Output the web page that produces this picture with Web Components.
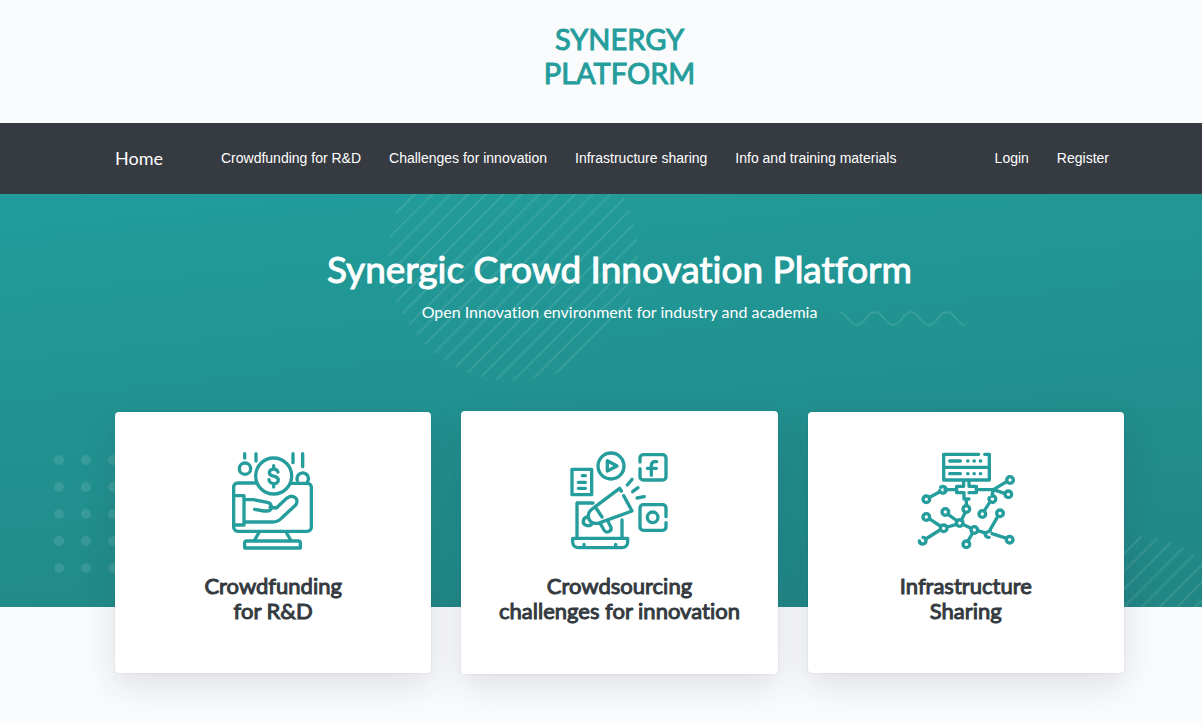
<!DOCTYPE html>
<html lang="en">
<head>
<meta charset="utf-8">
<meta name="viewport" content="width=device-width, initial-scale=1">
<title>Synergy Platform</title>
<style>
  :root {
    --teal: #259d9c;
    --page: #f9fbfd;
    --gutter-start: 115px;
    --gutter-end: 78px;
    --display: Lato, "Noto Sans", sans-serif;
  }
  body { margin: 0; background: var(--page); font-family: "Liberation Sans", Arial, sans-serif; font-variant-ligatures: none; color: #343a40; }
</style>
</head>
<body>
<site-header>Synergy<br>Platform</site-header>
<site-nav></site-nav>
<main>
  <hero-banner>
    <span slot="title">Synergic Crowd Innovation Platform</span>
    <span slot="lead">Open Innovation environment for industry and academia</span>
  </hero-banner>
  <card-row>
    <feature-card icon="funding">Crowdfunding<br>for R&amp;D</feature-card>
    <feature-card icon="sourcing" raised>Crowdsourcing<br>challenges for innovation</feature-card>
    <feature-card icon="sharing">Infrastructure<br>Sharing</feature-card>
  </card-row>
</main>

<script>
const define = (name, html) => customElements.define(name, class extends HTMLElement {
  constructor() {
    super();
    this.attachShadow({ mode: 'open' }).innerHTML = html;
  }
});

define('site-header', `
  <style>
    :host { display: block; padding: 22px var(--gutter-end) 33px var(--gutter-start); text-align: center; }
    a { display: inline-block; vertical-align: top; color: var(--teal); font-family: var(--display); font-size: 29px; line-height: 34px; text-decoration: none; text-transform: uppercase; -webkit-text-stroke: 1px; }
  </style>
  <header><a href="#"><slot></slot></a></header>`);

define('site-nav', `
  <style>
    :host { display: block; background: #363a41; }
    nav { display: flex; align-items: center; box-sizing: border-box; min-height: 71px; padding: 0 93px 2px var(--gutter-start); }
    a { color: #fff; text-decoration: none; font-size: 14px; line-height: 20px; white-space: nowrap; }
    .home { font-family: var(--display); font-size: 18px; line-height: 24px; margin-right: 58px; }
    ul { display: flex; gap: 28px; margin: 0; padding: 0; list-style: none; }
    .account { margin-left: auto; }
  </style>
  <nav>
    <a class="home" href="#">Home</a>
    <ul>
      <li><a href="#">Crowdfunding for R&amp;D</a></li>
      <li><a href="#">Challenges for innovation</a></li>
      <li><a href="#">Infrastructure sharing</a></li>
      <li><a href="#">Info and training materials</a></li>
    </ul>
    <ul class="account">
      <li><a href="#">Login</a></li>
      <li><a href="#">Register</a></li>
    </ul>
  </nav>`);

define('hero-banner', `
  <style>
    :host { display: block; position: relative; overflow: hidden; color: #fff; text-align: center;
      font-family: var(--display); background: linear-gradient(174deg, #219d9b, #218684);
      padding: 51px var(--gutter-end) 283px var(--gutter-start); }
    h1 { margin: 0; font-size: 37px; line-height: 48px; font-weight: 400; -webkit-text-stroke: 1px; }
    p { margin: 7px 0 0; font-size: 16px; line-height: 24px; }
    h1, p { position: relative; }
    svg { position: absolute; fill: none; stroke: #fff; stroke-width: 2; opacity: .1; }
    .disc-top { left: 388px; top: -63px; }
    .disc-end { right: -50px; top: 341px; }
    .wave { left: 837px; top: 115px; }
    .dots { left: 54px; top: 261px; fill: #fff; stroke: none; }
  </style>
  <svg class="disc-top" width="250" height="250" aria-hidden="true">
    <defs><pattern id="a" width="17.8" height="17.8" x="1" patternUnits="userSpaceOnUse"><path stroke="#fff" stroke-width="2" d="M-2 19.8 19.8-2M-2 2 2-2M15.8 19.8l4-4"/></pattern></defs>
    <circle cx="125" cy="125" r="125" fill="url(#a)" stroke="none"/>
  </svg>
  <svg class="disc-end" width="250" height="250" aria-hidden="true">
    <defs><pattern id="b" width="17.8" height="17.8" x="16" patternUnits="userSpaceOnUse"><path stroke="#fff" stroke-width="2" d="M-2 19.8 19.8-2M-2 2 2-2M15.8 19.8l4-4"/></pattern></defs>
    <circle cx="125" cy="125" r="125" fill="url(#b)" stroke="none"/>
  </svg>
  <svg class="wave" width="132" height="20" aria-hidden="true">
    <path d="M2 3c8 0 10 13 18 13s10-13 18-13 10 13 18 13 10-13 18-13 10 13 18 13 10-13 18-13 10 13 18 13"/>
  </svg>
  <svg class="dots" width="80" height="120" aria-hidden="true">
    <defs><pattern id="d" width="27" height="27" patternUnits="userSpaceOnUse"><circle cx="5" cy="5" r="5" fill="#fff"/></pattern></defs>
    <rect width="80" height="120" fill="url(#d)"/>
  </svg>
  <h1><slot name="title"></slot></h1>
  <p><slot name="lead"></slot></p>`);

define('card-row', `
  <style>
    :host { display: grid; grid-template-columns: repeat(3, minmax(0, 1fr)); gap: 30px; align-items: center; position: relative;
      margin-top: -196px; padding: 0 var(--gutter-end) 50px var(--gutter-start); }
  </style>
  <slot></slot>`);

const icons = {
  funding: ['6 28 294 300', `
    <path d="M68 36v13M102 36v22M213 36v27M242 36v39"/>
    <circle cx="69" cy="81" r="17"/><circle cx="155" cy="103" r="54"/>
    <path d="M226 116a17 17 0 1 1 31 3M102 124H47a12 12 0 0 0-12 12v121a12 12 0 0 0 12 12h209a12 12 0 0 0 12-12V137a12 12 0 0 0-12-12h-47"/>
    <path d="M35 162h31v88H35M66 174h28l42 8c15 3 17 24 0 26h-10l-28-5M144 197l19 2 31-29c17-15 40 1 27 20l-42 39c-8 9-15 12-27 12H66"/>
    <path d="M112 271 98 295M192 271l14 24M74 298h155a6 6 0 0 1 6 6v15H68v-15a6 6 0 0 1 6-6z"/>
    <path d="M155 72v10M155 126v10M168 91c-4-12-25-11-26 2-1 15 27 6 27 22 0 15-27 14-28-1"/>`],
  sourcing: ['31 28 294 300', `
    <circle cx="154" cy="73" r="39"/><path d="m143 57 29 16-29 15z"/>
    <path d="M37 83h59v76H37zM68 102h9M56 122h21M56 140h21"/>
    <path d="M241 61V49a10 10 0 0 1 10-10h58a10 10 0 0 1 10 10v56a10 10 0 0 1-10 10h-58a10 10 0 0 1-10-10V81"/>
    <path d="M291 60h-5c-8 0-11 4-11 12v29M263 80h27"/>
    <path d="M319 225v-26a10 10 0 0 0-10-10h-58a10 10 0 0 0-10 10v57a10 10 0 0 0 10 10h58a10 10 0 0 0 10-10v-13"/><circle cx="279" cy="227" r="16"/>
    <path d="m203 130 14-17M219 150l16-12M232 169l22-4"/>
    <path d="m185 148-5-8-80 60c-24 15-16 49 15 45l102-37-25-46M111 202l16 24"/>
    <path d="M84 226c-16 2-18 22-4 25 10 3 16-2 19-8M122 246l11 19c8 13 26 3 20-10l-9-18"/>
    <path d="M100 184H52v104M187 235v53M39 290h165v11a17 17 0 0 1-17 17H56a17 17 0 0 1-17-17zM73 308v10M168 308v10"/>`],
  sharing: ['27 28 294 300', `
    <path d="M212 38H107v77h137V38h-14M107 77h137M125 58h32M125 96h32"/>
    <path d="M179 58h1M198 58h1M217 58h1M179 96h1M198 96h1M217 96h1"/>
    <path d="M167 116v18h-21v19h22v19h15M183 116v18h22v19h-22M111 144h35M93 152l-28 15M205 144h51l40-24M256 144l34 11M255 146l-3 18M245 182l-16 25M175 174v18M172 212l-12 24M120 218l28 20M63 231l34 22M118 256l28-8M96 265l-43 27M164 248l25 12M194 274l-13 22M209 267l20 6M247 263l22-38M252 276l44 14"/>
    <path d="M98 137a10 10 0 1 1-3 10M258 163a10 10 0 1 1-14 5M45 287a10 10 0 1 1-11 11M243 287a10 10 0 0 1-11-13l15-7"/>
    <circle cx="55" cy="173" r="10"/><circle cx="306" cy="115" r="10"/><circle cx="301" cy="158" r="10"/><circle cx="223" cy="217" r="10"/><circle cx="276" cy="215" r="10"/><circle cx="175" cy="202" r="10"/><circle cx="112" cy="211" r="10"/><circle cx="55" cy="226" r="10"/><circle cx="107" cy="260" r="10"/><circle cx="155" cy="244" r="10"/><circle cx="199" cy="265" r="10"/><circle cx="175" cy="308" r="10"/><circle cx="305" cy="294" r="10"/>`]
};

customElements.define('feature-card', class extends HTMLElement {
  constructor() {
    super();
    const [box, art] = icons[this.getAttribute('icon')];
    this.attachShadow({ mode: 'open' }).innerHTML = `
      <style>
        :host { display: block; box-sizing: border-box; padding: 39px 16px 50px; background: #fff; border-radius: 4px; text-align: center;
          box-shadow: 0 0 2px rgba(50, 40, 70, .14), 0 12px 34px rgba(50, 40, 70, .13); }
        :host([raised]) { padding: 40px 16px 51px; }
        svg { display: block; margin: 0 auto 22px; width: 98px; height: 100px; fill: none; stroke: var(--teal); stroke-width: 10; stroke-linecap: round; stroke-linejoin: round; }
        h2 { margin: 0; font-family: var(--display); font-size: 22px; line-height: 25px; font-weight: 400; -webkit-text-stroke: 1px; }
      </style>
      <svg viewBox="${box}" aria-hidden="true">${art}</svg>
      <h2><slot></slot></h2>`;
  }
});
</script>
</body>
</html>
